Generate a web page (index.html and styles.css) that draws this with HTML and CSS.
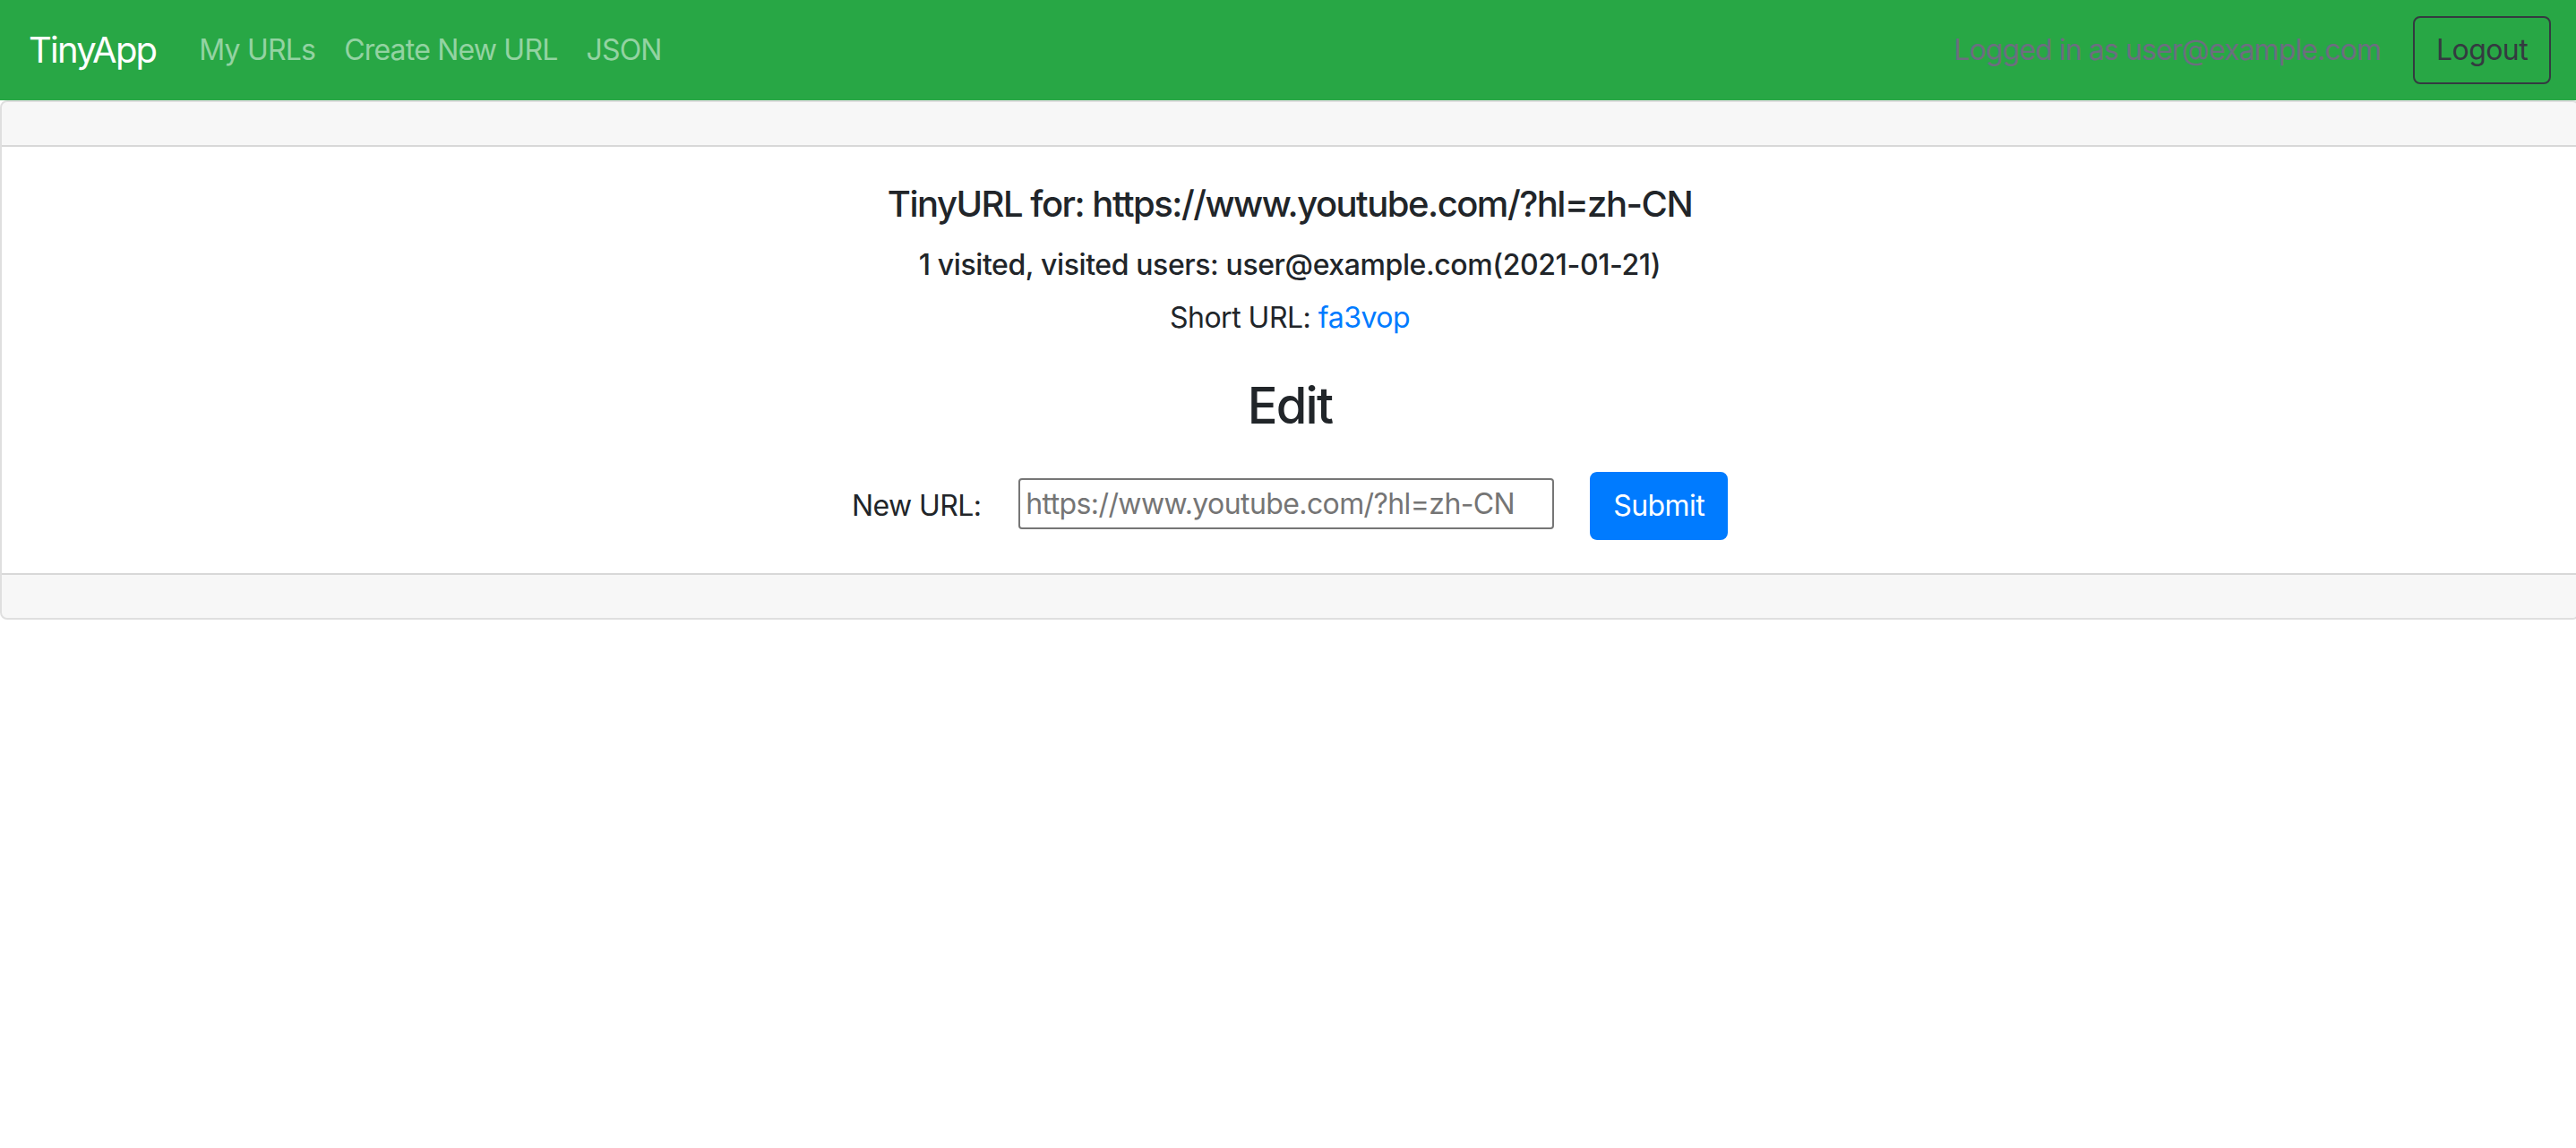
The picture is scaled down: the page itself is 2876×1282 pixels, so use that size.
FILE: index.html
```html
<!DOCTYPE html>
<html lang="en">
<head>
<meta charset="utf-8">
<title>TinyApp</title>
<link rel="stylesheet" href="styles.css">
</head>
<body>
<nav class="navbar">
  <a class="brand" href="#">TinyApp</a>
  <ul class="nav">
    <li><a class="nav-link" href="#">My URLs</a></li>
    <li><a class="nav-link" href="#">Create New URL</a></li>
    <li><a class="nav-link" href="#">JSON</a></li>
  </ul>
  <div class="nav-right">
    <span class="user">Logged in as user@example.com</span>
    <button class="btn-logout" type="button">Logout</button>
  </div>
</nav>
<div class="card">
  <div class="card-header"></div>
  <div class="card-body">
    <h5 class="card-title">TinyURL for: https://www.youtube.com/?hl=zh-CN</h5>
    <h6 class="visits">1 visited, visited users: user@example.com(2021-01-21)</h6>
    <p class="short">Short URL: <a href="#" class="link">fa3vop</a></p>
    <h3 class="edit">Edit</h3>
    <form class="edit-form">
      <label class="label" for="newurl">New URL:</label>
      <input class="url-input" id="newurl" type="text" placeholder="https://www.youtube.com/?hl=zh-CN">
      <button class="btn-submit" type="button">Submit</button>
    </form>
  </div>
  <div class="card-footer"></div>
</div>
</body>
</html>
```
FILE: styles.css
```css
* { box-sizing: border-box; }
html, body { margin: 0; padding: 0; }
body {
  font-family: Inter, "Liberation Sans", sans-serif;
  font-size: 32px;
  line-height: 1.5;
  letter-spacing: -0.6px;
  color: #212529;
  background: #fff;
  overflow-x: hidden;
}
.navbar {
  display: flex;
  align-items: center;
  height: 112px;
  padding: 16px 28px 16px 32px;
  background: #28a745;
}
.brand {
  font-size: 40px;
  line-height: 60px;
  padding: 10px 0;
  margin-right: 32px;
  letter-spacing: -1.8px;
  color: #fff;
  text-decoration: none;
}
.nav {
  display: flex;
  list-style: none;
  margin: 0;
  padding: 0;
}
.nav-link {
  display: block;
  padding: 16px;
  line-height: 48px;
  letter-spacing: -0.8px;
  color: rgba(255, 255, 255, 0.5);
  text-decoration: none;
}
.nav-right {
  margin-left: auto;
  display: flex;
  align-items: center;
}
.user {
  color: #6c6e80;
  letter-spacing: -0.9px;
  margin-right: 36px;
}
.btn-logout {
  font: inherit;
  letter-spacing: -0.6px;
  line-height: 48px;
  padding: 12px 24px;
  border: 2px solid #343a40;
  border-radius: 8px;
  background: transparent;
  color: #343a40;
}
.card {
  width: calc(100% + 4px);
  border: 2px solid rgba(0, 0, 0, 0.125);
  border-radius: 8px;
  overflow: hidden;
}
.card-header {
  height: 50px;
  background: rgba(0, 0, 0, 0.03);
  border-bottom: 2px solid rgba(0, 0, 0, 0.125);
}
.card-footer {
  height: 50px;
  background: rgba(0, 0, 0, 0.03);
  border-top: 2px solid rgba(0, 0, 0, 0.125);
}
.card-body {
  padding: 40px 40px 37px;
  text-align: center;
}
.card-title {
  margin: 0 0 25px;
  font-size: 40px;
  font-weight: 500;
  line-height: 48px;
  letter-spacing: -1.5px;
}
.visits {
  margin: 0 0 16px;
  font-size: 32px;
  font-weight: 500;
  line-height: 38px;
  letter-spacing: -0.4px;
}
.short {
  margin: 0 0 41px;
  line-height: 48px;
  letter-spacing: -0.5px;
}
.link {
  color: #007bff;
  text-decoration: none;
}
.edit {
  margin: 0 0 40px;
  font-size: 56px;
  font-weight: 500;
  line-height: 67px;
  letter-spacing: -1.8px;
}
.edit-form {
  display: flex;
  justify-content: center;
  align-items: center;
  height: 76px;
}
.label {
  margin-right: 42px;
}
.url-input {
  width: 598px;
  height: 57px;
  margin-bottom: 6px;
  padding: 2px 6px;
  font: inherit;
  font-size: 32px;
  letter-spacing: -0.6px;
  border: 2px solid #767676;
  border-radius: 4px;
  color: #212529;
}
.url-input::placeholder {
  color: #757575;
}
.btn-submit {
  margin-left: 40px;
  font: inherit;
  letter-spacing: -0.6px;
  line-height: 48px;
  padding: 12px 24px;
  border: 2px solid #007bff;
  border-radius: 8px;
  background: #007bff;
  color: #fff;
}
```
